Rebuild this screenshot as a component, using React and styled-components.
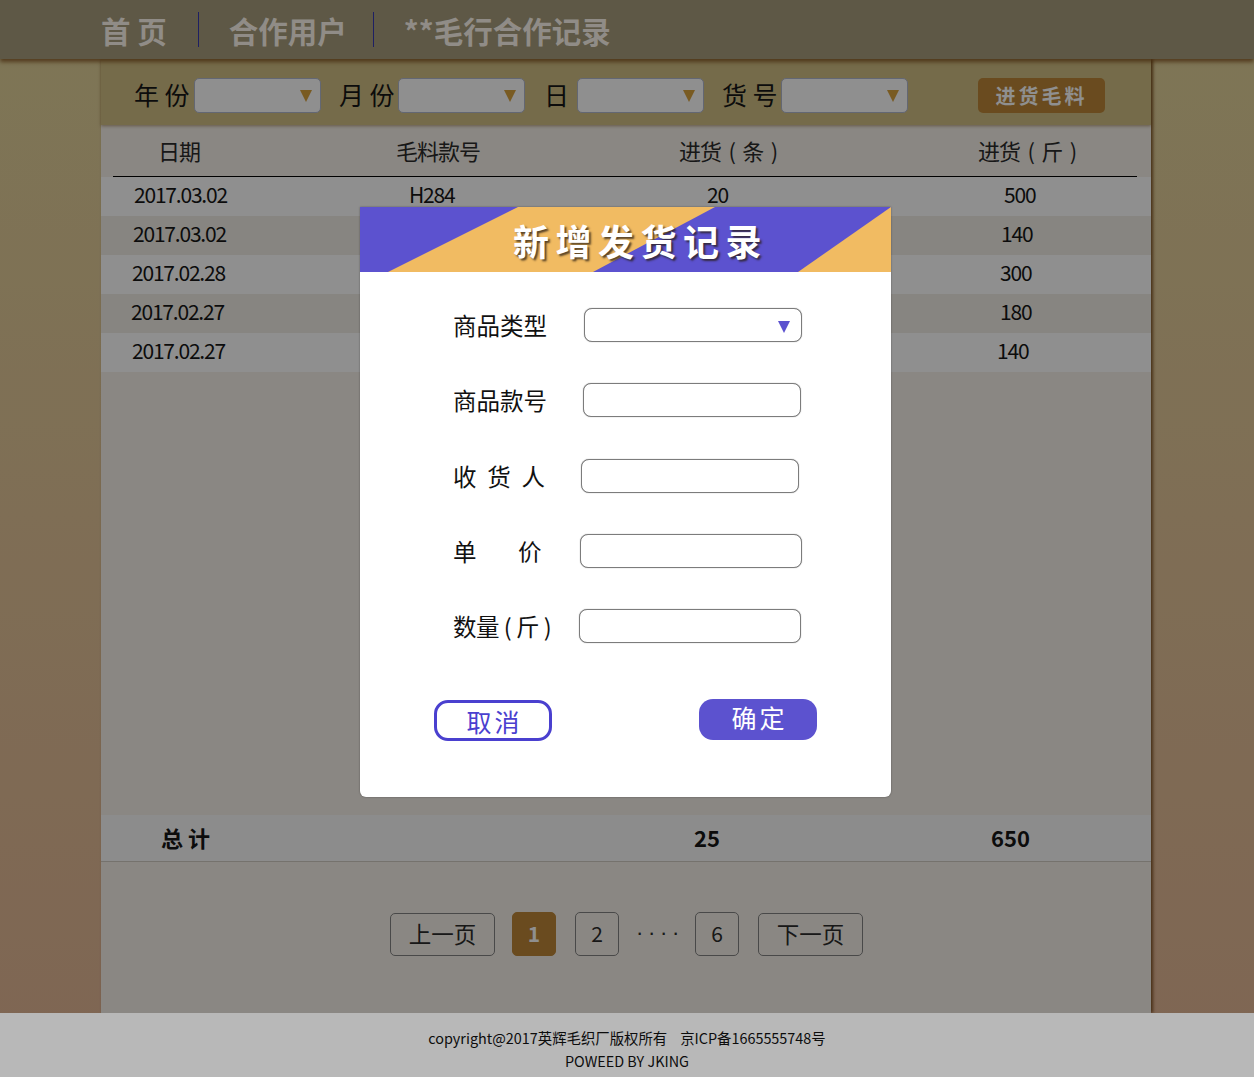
import React from 'react';
import styled, { createGlobalStyle } from 'styled-components';

const rows = [
    ['2017.03.02', 'H284', '20', '500', 33, 13],
    ['2017.03.02', '', '', '140', 32, 10],
    ['2017.02.28', '', '', '300', 31, 9],
    ['2017.02.27', '', '', '180', 30, 9],
    ['2017.02.27', '', '', '140', 31, 6],
];

const fields = [
    { label: '商品类型', select: true, left: 36, width: 218 },
    { label: '商品款号', left: 35, width: 218 },
    { label: '收 货 人', left: 33, width: 218, ls: 2.75, extra: true },
    { label: '单\u3000价', left: 32, width: 222, ls: 9 },
    { label: '数量 ( 斤 )', left: 31, width: 222, ls: -0.5 },
];

function App() {
    return (
        <Page>
            <GlobalStyle />
            <Header>
                <NavItem>首 页</NavItem>
                <NavLine />
                <NavItem>合作用户</NavItem>
                <NavLine $tight />
                <NavItem>**毛行合作记录</NavItem>
            </Header>
            <Panel>
                <FilterBar>
                    <FilterLabel>年 份</FilterLabel>
                    <FilterSelect />
                    <FilterLabel>月 份</FilterLabel>
                    <FilterSelect />
                    <FilterLabel $narrow>日</FilterLabel>
                    <FilterSelect />
                    <FilterLabel>货 号</FilterLabel>
                    <FilterSelect />
                    <AddButton>进货毛料</AddButton>
                </FilterBar>
                <TableHead>
                    <HeadCell $w={232} $pl={45}>日期</HeadCell>
                    <HeadCell $w={283} $pl={51}>毛料款号</HeadCell>
                    <HeadCell $w={299} $pl={51}>进货 ( 条 )</HeadCell>
                    <HeadCell $w={200} $pl={51}>进货 ( 斤 )</HeadCell>
                </TableHead>
                <Rows>
                    {rows.map((r, i) => (
                        <Row key={i} $odd={i % 2 === 0}>
                            <Cell $pad={r[4]}>{r[0]}</Cell>
                            <Cell>{r[1]}</Cell>
                            <Cell>{r[2]}</Cell>
                            <Cell $pad={r[5]}>{r[3]}</Cell>
                        </Row>
                    ))}
                </Rows>
                <Total>
                    <TotalLabel>总 计</TotalLabel>
                    <TotalNum $w={297}>25</TotalNum>
                    <TotalNum>650</TotalNum>
                </Total>
                <Pager>
                    <PageBtn $wide>上一页</PageBtn>
                    <PageBtn $active>1</PageBtn>
                    <PageBtn>2</PageBtn>
                    <Dots>····</Dots>
                    <PageBtn>6</PageBtn>
                    <PageBtn $wide>下一页</PageBtn>
                </Pager>
            </Panel>
            <Footer>
                <FootLine>copyright@2017英辉毛织厂版权所有&nbsp;&nbsp;&nbsp;&nbsp;京ICP备1665555748号</FootLine>
                <FootLine>POWEED BY JKING</FootLine>
            </Footer>

            <Overlay>
                <Modal>
                    <ModalTitle>
                        <svg width="531" height="65" viewBox="0 0 531 65">
                            <rect width="531" height="65" fill="#5c52cf" />
                            <polygon points="158,0 355,0 233,65 28,65" fill="#f1bb62" />
                            <polygon points="531,0 531,65 438,65" fill="#f1bb62" />
                        </svg>
                        <TitleText>新增发货记录</TitleText>
                    </ModalTitle>
                    <Form>
                        {fields.map(f => (
                            <FormRow key={f.label} $extra={f.extra}>
                                <FormLabel $ls={f.ls}>{f.label}</FormLabel>
                                <FormBox style={{ marginLeft: f.left, width: f.width }}>
                                    {f.select && <BlueArrow />}
                                </FormBox>
                            </FormRow>
                        ))}
                    </Form>
                    <Actions>
                        <CancelBtn>取消</CancelBtn>
                        <OkBtn>确定</OkBtn>
                    </Actions>
                </Modal>
            </Overlay>
        </Page>
    )
}

const font = `"Noto Sans CJK SC", "Noto Sans", sans-serif`;

const GlobalStyle = createGlobalStyle`
    html, body {
        margin: 0;
        padding: 0;
    }
    body {
        font-family: ${font};
        color: #000;
    }
`

const Page = styled.div`
    position: relative;
    width: 1254px;
    height: 1077px;
    overflow: hidden;
    display: flex;
    flex-direction: column;
    background: linear-gradient(180deg, #afa478 0%, #b18d74 100%);
`
const Header = styled.header`
    position: relative;
    z-index: 2;
    height: 59px;
    box-sizing: border-box;
    flex: none;
    display: flex;
    align-items: center;
    padding: 0 0 0 101px;
    background: #837a62;
    box-shadow: 0 3px 4px rgba(90, 50, 10, 0.7);
`
const NavItem = styled.span`
    font-size: 29.5px;
    font-weight: 700;
    color: #c8c3bb;
    line-height: 34px;
`
const NavLine = styled.i`
    width: 1px;
    height: 35px;
    margin: 0 30px 0 ${p => (p.$tight ? '26px' : '31px')};
    background: #2a2c8a;
`
const Panel = styled.main`
    position: relative;
    width: 1050px;
    margin-left: 101px;
    flex: 1;
    display: flex;
    flex-direction: column;
    background: #c0bcb6;
    box-shadow: 2px 0 3px rgba(80, 45, 10, 0.8);
`
const FilterBar = styled.div`
    height: 66px;
    box-sizing: border-box;
    flex: none;
    display: flex;
    align-items: center;
    padding: 6px 0 0 33px;
    background: #a39567;
    box-shadow: 0 1px 3px rgba(90, 60, 20, 0.5);
`
const FilterLabel = styled.span`
    font-size: 25px;
    line-height: 34px;
    width: ${p => (p.$narrow ? '33px' : '59px')};
    padding-left: ${p => (p.$narrow ? '2px' : '1px')};
    margin-top: -2px;
    color: #111;
    &:first-child {
        padding-left: 0;
        width: 60px;
    }
`
const FilterSelect = styled.div`
    position: relative;
    width: 127px;
    height: 35px;
    box-sizing: border-box;
    margin-right: 17px;
    border: 1px solid #8a8fa0;
    border-radius: 5px;
    background: #c6c6c6;
    &::after {
        content: '';
        position: absolute;
        right: 8px;
        top: 11px;
        border-left: 6px solid transparent;
        border-right: 6px solid transparent;
        border-top: 12px solid #a87e30;
    }
`
const AddButton = styled.button`
    width: 127px;
    height: 35px;
    margin-left: 53px;
    border: none;
    border-radius: 5px;
    padding: 0;
    background: #94692c;
    color: #c6c6c6;
    font-family: ${font};
    font-size: 20px;
    font-weight: 700;
    letter-spacing: 3px;
`
const TableHead = styled.div`
    height: 51px;
    box-sizing: content-box;
    flex: none;
    display: flex;
    align-items: center;
    margin: 0 14px 0 12px;
    border-bottom: 1px solid #000;
`
const HeadCell = styled.div`
    width: ${p => p.$w}px;
    padding: 0 0 2px ${p => p.$pl}px;
    box-sizing: border-box;
    font-size: 22px;
    letter-spacing: -1px;
    word-spacing: 3.5px;
    white-space: nowrap;
    color: #222;
`
const Rows = styled.div`
    flex: none;
`
const Row = styled.div`
    height: 39px;
    box-sizing: border-box;
    padding-bottom: 6px;
    display: grid;
    grid-template-columns: 308px 298px 284px 1fr;
    align-items: center;
    background: ${p => (p.$odd ? '#c6c6c6' : '#bbb9b3')};
    font-size: 21px;
    letter-spacing: -1.2px;
    color: #111;
`
const Cell = styled.div`
    padding-left: ${p => p.$pad || 0}px;
`
const Total = styled.div`
    height: 46px;
    box-sizing: content-box;
    flex: none;
    margin-top: 443px;
    display: flex;
    align-items: center;
    padding: 0 0 0 60px;
    background: #c3c3c3;
    border-bottom: 1px solid #a39f98;
    font-size: 22px;
    font-weight: 700;
    line-height: 42px;
    color: #111;
`
const TotalLabel = styled.div`
    width: 533px;
    margin-top: -3px;
`
const TotalNum = styled.div`
    width: ${p => (p.$w ? `${p.$w}px` : 'auto')};
    margin-top: -3px;
`
const Pager = styled.nav`
    flex: 1;
    display: flex;
    align-items: center;
    gap: 18px;
    padding: 0 0 7px 289px;
`
const PageBtn = styled.button`
    width: ${p => (p.$wide ? '105px' : '44px')};
    height: ${p => (p.$wide ? '43px' : '44px')};
    padding: 0 0 2px;
    border: 1px solid ${p => (p.$active ? '#94692c' : '#666')};
    border-radius: 5px;
    background: ${p => (p.$active ? '#94692c' : 'transparent')};
    color: ${p => (p.$active ? '#c6c6c6' : '#222')};
    font-family: ${font};
    font-size: ${p => (p.$wide ? '22.5px' : '21px')};
    font-weight: ${p => (p.$active ? 700 : 400)};
    margin-right: ${p => (p.$active ? '1px' : '0')};
    &:first-child {
        margin-right: -1px;
    }
    &:last-child {
        margin-left: 1px;
    }
`
const Dots = styled.span`
    width: 41px;
    margin: -2px 0 0 -1px;
    font-family: "Liberation Sans", sans-serif;
    font-size: 22px;
    letter-spacing: 4.7px;
    white-space: nowrap;
    color: #222;
`
const Footer = styled.footer`
    height: 64px;
    box-sizing: border-box;
    padding-top: 8px;
    flex: none;
    position: relative;
    display: flex;
    flex-direction: column;
    align-items: center;
    justify-content: center;
    background: #fff;
`
const FootLine = styled.div`
    font-size: 14.4px;
    line-height: 23px;
    color: #111;
`
const Overlay = styled.div`
    position: absolute;
    inset: 0;
    z-index: 5;
    display: flex;
    justify-content: center;
    padding: 207px 3px 0 0;
    background: rgba(0, 0, 0, 0.28);
`
const Modal = styled.section`
    width: 531px;
    height: 590px;
    background: #fff;
    border-radius: 0 0 6px 6px;
    overflow: hidden;
    box-shadow: 0 0 2px rgba(0, 0, 0, 0.4);
    display: flex;
    flex-direction: column;
`
const ModalTitle = styled.div`
    position: relative;
    height: 65px;
    flex: none;
    svg {
        display: block;
    }
`
const TitleText = styled.h2`
    position: absolute;
    left: 153px;
    top: 7px;
    margin: 0;
    font-size: 36px;
    line-height: 52px;
    font-weight: 700;
    letter-spacing: 6.5px;
    color: #fff;
    white-space: nowrap;
    text-shadow: 2px 2px 2px rgba(40, 30, 20, 0.75);
`
const Form = styled.div`
    display: flex;
    flex-direction: column;
    gap: 41px;
    padding: 36px 0 0 93px;
`
const FormRow = styled.div`
    display: flex;
    align-items: center;
    height: 34px;
    margin-top: ${p => (p.$extra ? '1px' : '0')};
`
const FormLabel = styled.label`
    width: 95px;
    flex: none;
    margin-top: -1px;
    font-size: 23.5px;
    line-height: 34px;
    letter-spacing: ${p => p.$ls || 0}px;
    white-space: pre;
    color: #111;
`
const FormBox = styled.div`
    position: relative;
    height: 34px;
    box-sizing: border-box;
    border: 1px solid #7c7c7c;
    border-radius: 8px;
    background: #fff;
    box-shadow: 0 0 1px #888;
`
const BlueArrow = styled.i`
    position: absolute;
    right: 11px;
    top: 12px;
    border-left: 6px solid transparent;
    border-right: 6px solid transparent;
    border-top: 12px solid #5c52cf;
`
const Actions = styled.div`
    display: flex;
    align-items: center;
    justify-content: space-between;
    padding: 57px 74px 0 74px;
`
const CancelBtn = styled.button`
    width: 118px;
    height: 41px;
    box-sizing: border-box;
    border: 3px solid #4a40cf;
    border-radius: 14px;
    background: #fff;
    color: #4a40cf;
    font-family: ${font};
    font-size: 25px;
    letter-spacing: 3px;
    padding: 0 0 5px 3px;
`
const OkBtn = styled.button`
    width: 118px;
    height: 41px;
    border: none;
    border-radius: 14px;
    background: #5c52cf;
    color: #fff;
    font-family: ${font};
    font-size: 25px;
    letter-spacing: 3px;
    padding: 0 0 5px 3px;
    margin-top: -2px;
`

export default App;
